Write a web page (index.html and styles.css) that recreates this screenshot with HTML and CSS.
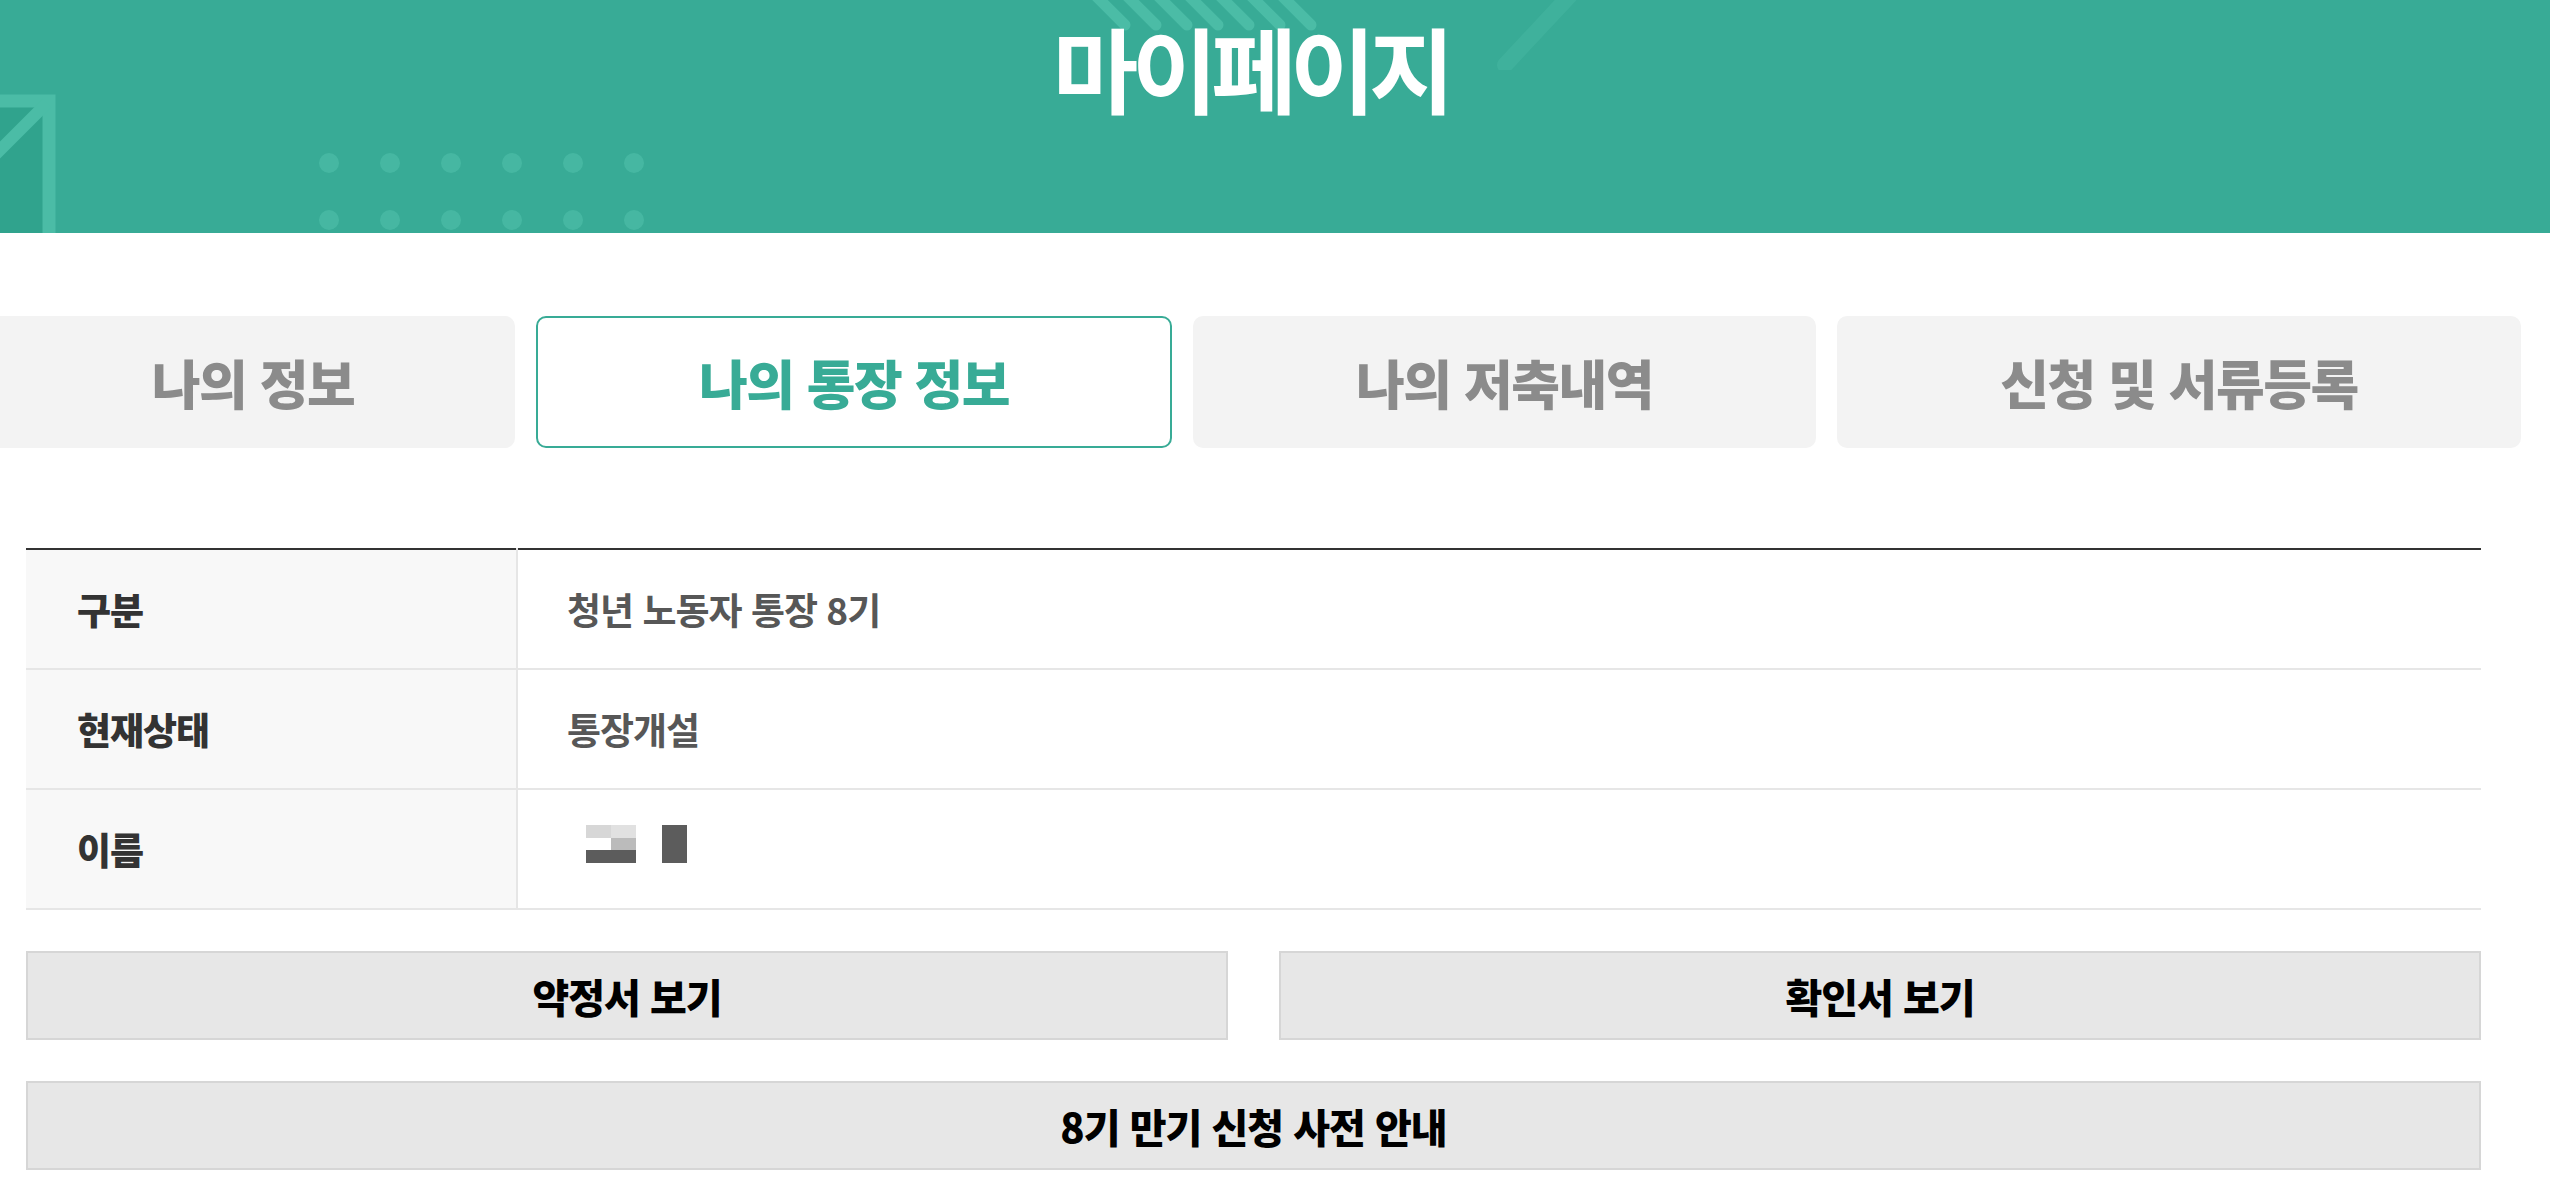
FILE: index.html
```html
<!DOCTYPE html>
<html lang="ko">
<head>
<meta charset="utf-8">
<title>마이페이지</title>
<link rel="stylesheet" href="styles.css">
</head>
<body>
<header class="hero">
  <svg class="hero-arrow" width="80" height="233" viewBox="0 0 80 233">
    <rect x="-20" y="95" width="75" height="140" fill="#30a38d"/>
    <path d="M-20 101 H49 V240" fill="none" stroke="#4bbca6" stroke-width="13"/>
    <path d="M47 103 L-20 170" fill="none" stroke="#4bbca6" stroke-width="12"/>
  </svg>
  <svg class="hero-dots" width="330" height="90" viewBox="0 0 330 90">
    <g fill="#4bbca6" opacity="0.75">
      <circle cx="10" cy="10" r="10"/><circle cx="71" cy="10" r="10"/><circle cx="132" cy="10" r="10"/>
      <circle cx="193" cy="10" r="10"/><circle cx="254" cy="10" r="10"/><circle cx="315" cy="10" r="10"/>
      <circle cx="10" cy="67" r="10"/><circle cx="71" cy="67" r="10"/><circle cx="132" cy="67" r="10"/>
      <circle cx="193" cy="67" r="10"/><circle cx="254" cy="67" r="10"/><circle cx="315" cy="67" r="10"/>
    </g>
  </svg>
  <svg class="hero-stripes" width="260" height="40" viewBox="0 0 260 40">
    <g stroke="#4bbca6" stroke-width="11" stroke-linecap="round">
      <path d="M-10 -20 L35 25"/><path d="M21 -20 L66 25"/><path d="M52 -20 L97 25"/>
      <path d="M83 -20 L128 25"/><path d="M114 -20 L159 25"/><path d="M145 -20 L190 25"/>
      <path d="M176 -20 L221 25"/>
    </g>
  </svg>
  <svg class="hero-line" width="90" height="70" viewBox="0 0 90 70">
    <path d="M80 -10 L10 65" stroke="#45b5a0" stroke-width="16" stroke-linecap="round" opacity="0.6"/>
  </svg>
  <h1 class="hero-title">마이페이지</h1>
</header>

<nav class="tabs">
  <a class="tab tab-info">나의 정보</a>
  <a class="tab tab-account active">나의 통장 정보</a>
  <a class="tab tab-saving">나의 저축내역</a>
  <a class="tab tab-docs">신청 및 서류등록</a>
</nav>

<main class="content">
  <table class="info-table">
    <tr>
      <th>구분</th>
      <td>청년 노동자 통장 8기</td>
    </tr>
    <tr>
      <th>현재상태</th>
      <td>통장개설</td>
    </tr>
    <tr>
      <th>이름</th>
      <td>
        <div class="masked">
          <span class="mask-glyph">
            <i class="c1"></i><i class="c2"></i>
            <i class="c0"></i><i class="c3"></i>
            <i class="c4"></i><i class="c4"></i>
          </span>
          <span class="mask-bar"></span>
        </div>
      </td>
    </tr>
  </table>

  <div class="btn-row">
    <button class="btn">약정서 보기</button>
    <button class="btn">확인서 보기</button>
  </div>
  <button class="btn btn-wide">8기 만기 신청 사전 안내</button>
</main>
</body>
</html>
```

FILE: styles.css
```css
* { box-sizing: border-box; }

body {
  margin: 0;
  background: #ffffff;
  font-family: "Noto Sans CJK KR", "Noto Sans", sans-serif;
}

.hero {
  position: relative;
  height: 233px;
  background: #38ab96;
  overflow: hidden;
}

.hero-arrow { position: absolute; left: 0; top: 0; }
.hero-dots { position: absolute; left: 319px; top: 153px; }
.hero-stripes { position: absolute; left: 1090px; top: 0; }
.hero-line { position: absolute; left: 1495px; top: 0; }

.hero-title {
  position: relative;
  margin: 0 0 0 26px;
  width: 2455px;
  padding: 20px 6px 0 0;
  text-align: center;
  color: #ffffff;
  font-size: 93px;
  line-height: 1;
  font-weight: 700;
  letter-spacing: -6.5px;
}

.tabs {
  display: flex;
  gap: 21px;
  margin: 83px 0 0 -9px;
}

.tab {
  display: flex;
  align-items: center;
  justify-content: center;
  height: 132px;
  border-radius: 10px;
  background: #f3f3f3;
  color: #8b8b8b;
  font-size: 53px;
  font-weight: 900;
  letter-spacing: -1.5px;
  white-space: nowrap;
}

.tab-info { width: 524px; }
.tab-account { width: 636px; }
.tab-saving { width: 623px; }
.tab-docs { width: 684px; }

.tab.active {
  background: #ffffff;
  border: 2px solid #38ab96;
  color: #38ab96;
}

.content {
  width: 2455px;
  margin: 100px 0 0 26px;
}

.info-table {
  width: 100%;
  border-collapse: collapse;
  border-top: 2px solid #333333;
}

.info-table tr { height: 120px; border-bottom: 2px solid #e6e6e6; }

.info-table th {
  width: 491px;
  padding: 0 0 0 51px;
  background: #f8f8f8;
  border-right: 2px solid #e6e6e6;
  text-align: left;
  color: #333333;
  font-size: 37px;
  font-weight: 900;
  letter-spacing: -1px;
}

.info-table td {
  padding: 0 0 0 49px;
  color: #575757;
  font-size: 37px;
  font-weight: 700;
  letter-spacing: -1px;
}

.masked {
  display: flex;
  align-items: flex-start;
  gap: 26px;
  margin: -10px 0 0 19px;
}

.mask-glyph {
  display: grid;
  grid-template-columns: 25px 25px;
  grid-template-rows: 13px 12px 13px;
}

.mask-glyph i { display: block; }
.mask-glyph .c0 { background: #ffffff; }
.mask-glyph .c1 { background: #d7d7d7; }
.mask-glyph .c2 { background: #e1e1e1; }
.mask-glyph .c3 { background: #bbbbbb; }
.mask-glyph .c4 { background: #5c5c5c; }

.mask-bar {
  display: block;
  width: 25px;
  height: 38px;
  background: #5c5c5c;
}

.btn-row {
  display: flex;
  gap: 51px;
  margin-top: 41px;
}

.btn {
  display: block;
  flex: 1;
  height: 89px;
  padding: 0;
  border: 2px solid #d6d6d6;
  background: #e7e7e7;
  color: #000000;
  font-family: "Noto Sans CJK KR", "Noto Sans", sans-serif;
  font-size: 40px;
  font-weight: 900;
  letter-spacing: -1px;
}

.btn-wide {
  width: 100%;
  margin-top: 41px;
}
```
